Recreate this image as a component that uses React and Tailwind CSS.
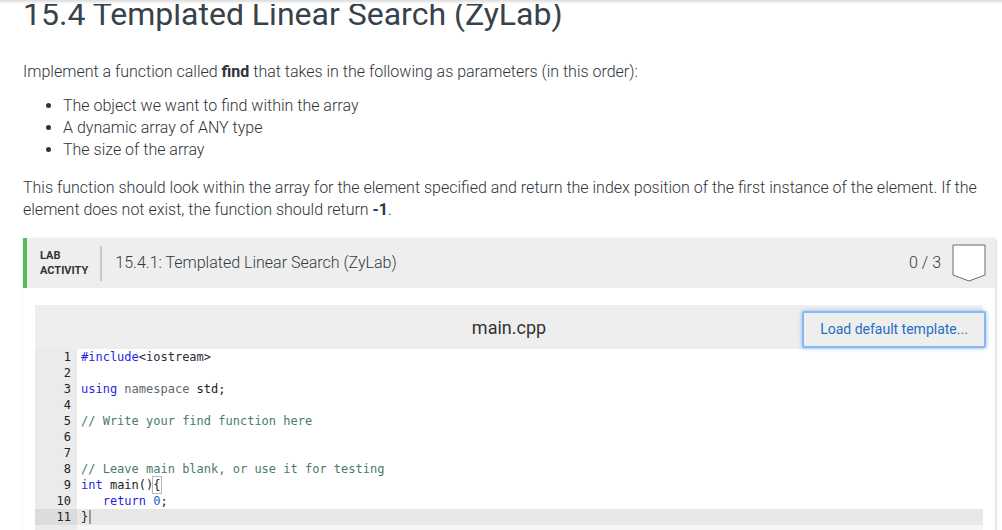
const code = [
  [["#include", "text-[#1f1fe6]"], ["<iostream>", "text-[#2b2b3a]"]],
  [],
  [["using", "text-[#1f1fe6]"], [" "], ["namespace", "text-[#5b6770]"], [" std;", "text-[#222]"]],
  [],
  [["// Write your find function here", "text-[#4b7b6c]"]],
  [],
  [],
  [["// Leave main blank, or use it for testing", "text-[#4b7b6c]"]],
  [["int", "text-[#1f1fe6]"], [" main()", "text-[#222]"], ["{", "text-[#222] outline outline-1 outline-[#b8b8b8]"]],
  [["   "], ["return", "text-[#1f1fe6]"], [" "], ["0", "text-[#1565c0]"], [";", "text-[#222]"]],
  [["}", "text-[#222]"]],
];

const Badge = () => (
  <svg width="34" height="38" viewBox="0 0 34 38" className="ml-[11px]">
    <path d="M1 1 H33 V31 L17 37 L1 31 Z" fill="white" stroke="#6b6b6b" strokeWidth="1" />
  </svg>
);

export default function App() {
  return (
    <div className="relative min-h-[530px] overflow-hidden bg-white font-['Roboto',sans-serif] text-[#333a40]">
      <div className="absolute left-0 right-0 top-0 h-[4px] bg-gradient-to-b from-[#dcdcdc] to-white" />
      <div className="pl-[23px] pr-[7px]">
        <h1 className="mt-[-2px] text-[32px] leading-[32px] font-normal text-[#37424a]">
          15.4 Templated Linear Search (ZyLab)
        </h1>

        <p className="mt-[31px] text-[16px] leading-[22px] font-light text-[#2f3439]">
          Implement a function called <b className="font-bold">find</b> that takes in the following as parameters (in this order):
        </p>
        <ul className="mt-[12px] list-disc pl-[40px] text-[16px] leading-[22px] font-light text-[#2f3439]">
          <li>The object we want to find within the array</li>
          <li>A dynamic array of ANY type</li>
          <li>The size of the array</li>
        </ul>
        <p className="mt-[16px] text-[16px] leading-[22px] font-light text-[#2f3439] pr-[10px]">
          This function should look within the array for the element specified and return the index position of the first instance of the element. If the element does not exist, the function should return <b className="font-bold">-1</b>.
        </p>

        <div className="mt-[17px] w-[972px] shadow-[1px_1px_3px_rgba(0,0,0,0.18)]">
          <div className="flex h-[50px] items-center border-l-4 border-[#5cb85c] bg-[#eeeeee]">
            <div className="ml-[13px] flex flex-col text-[11px] leading-[15px] font-bold text-[#333]">
              <span>LAB</span>
              <span>ACTIVITY</span>
            </div>
            <div className="ml-[12px] h-[35px] w-[2px] bg-[#c8c8c8]" />
            <div className="ml-[13px] text-[16px] font-light text-[#333a40]">15.4.1: Templated Linear Search (ZyLab)</div>
            <div className="ml-auto flex items-center pr-[9px]">
              <span className="text-[16px] font-light text-[#333a40]">0 / 3</span>
              <Badge />
            </div>
          </div>

          <div className="px-[12px] pt-[17px] pb-[6px]">
            <div className="bg-[#eeeeee]">
              <div className="relative flex h-[44px] items-center justify-center">
                <span className="text-[18px] font-normal text-[#333]">main.cpp</span>
                <button className="absolute right-[-3px] top-[6px] h-[37px] w-[184px] rounded-[2px] border-2 border-[#86b8f2] bg-[#eeeeee] text-[14px] text-[#1f6fc5] shadow-[0_0_4px_#86b8f2]">
                  Load default template...
                </button>
              </div>
              <div className="bg-white font-['DejaVu_Sans_Mono',monospace] text-[12px] leading-[16px]">
                {code.map((parts, i) => {
                  const last = i === code.length - 1;
                  return (
                    <div key={i} className={`flex ${last ? "bg-[#e8e8e8]" : ""}`}>
                      <div className={`w-[42px] shrink-0 pr-[6px] text-right text-[#222] ${last ? "bg-[#dcdcdc]" : "bg-[#ebebeb]"}`}>
                        {i + 1}
                      </div>
                      <div className="flex items-center whitespace-pre pl-[4px]">
                        {parts.map(([t, c], j) => (
                          <span key={j} className={c || ""}>{t}</span>
                        ))}
                        {last && <span className="ml-[1px] inline-block h-[14px] w-[2px] bg-[#9a9a9a]" />}
                      </div>
                    </div>
                  );
                })}
                <div className="flex h-[10px] bg-[#f6f6f6]">
                  <div className="w-[42px] bg-[#ebebeb]" />
                </div>
              </div>
            </div>
          </div>
        </div>
      </div>
    </div>
  );
}
